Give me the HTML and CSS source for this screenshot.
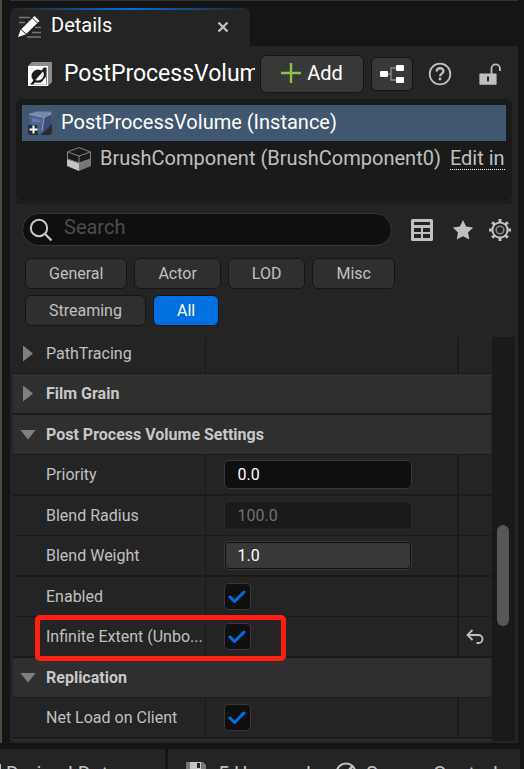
FILE: index.html
```html
<!DOCTYPE html>
<html lang="en">
<head>
<meta charset="utf-8">
<meta name="viewport" content="width=device-width, initial-scale=1">
<title>Details</title>
<link rel="stylesheet" href="styles.css">
</head>
<body>
<div class="window">
  <main class="dock">
    <div class="tab">
      <svg class="tab-icon" width="24" height="24" viewBox="0 0 24 24"><path d="M1 2.500h11M1 7.500h6M17 12.500h6M14 17.500h9M9 22h14" stroke="#777" stroke-width="1.500"/><path d="M0 22l2.500-7L16.500 1l5 5L7.500 19.500z" fill="#fff"/><path d="M3 14.500l5 4.500M14.500 3l5 5" stroke="#242424" stroke-width="1"/></svg>
      <h1>Details</h1>
      <button class="close" aria-label="Close tab"><svg width="12" height="12" viewBox="0 0 12 12"><path d="M1.500 1.500l9 9M10.500 1.500l-9 9" stroke="#c0c0c0" stroke-width="2.400"/></svg></button>
    </div>
    <section class="panel">
      <header class="actor">
        <svg class="actor-icon" width="24" height="24" viewBox="0 0 24 24"><path d="M0 4l4-4h20v20l-4 4z" fill="#8d8d8d"/><path d="M0 4h20v20H0z" fill="#fff"/><path d="M18.500 5.500v17H2L5 19l11-13.500z" fill="#1b1b1b"/><path d="M18 8v14.500H5L7 20.500h6l5-6z" fill="#fff"/><circle cx="10" cy="14" r="6.500" fill="#1b1b1b"/><path d="M7.500 18L15 9.500a6 6 0 0 1-7.500 8.500z" fill="#fff"/></svg>
        <h2>PostProcessVolume</h2>
        <button class="btn add"><svg width="20" height="20" viewBox="0 0 20 20"><path d="M10 0v20M0 10h20" stroke="#8bc34a" stroke-width="2.400"/></svg>Add</button>
        <button class="btn graph" aria-label="Edit blueprint"><svg width="26" height="20" viewBox="0 0 26 20"><path d="M8 10h4M18 4h-6v12h6" fill="none" stroke="#8a8a8a" stroke-width="1.300"/><rect x="1" y="7" width="8" height="6" rx="1" fill="#fff"/><rect x="17" y="1" width="8" height="6" rx="1" fill="#fff"/><rect x="17" y="13" width="8" height="6" rx="1" fill="#fff"/></svg></button>
        <button class="plain help" aria-label="Help"><svg width="24" height="24" viewBox="0 0 24 24"><circle cx="12" cy="12" r="10.300" fill="none" stroke="#c0c0c0" stroke-width="1.800"/><path d="M8.700 9.500c0-4.300 6.700-4.300 6.700-.3 0 2.400-3.300 2.500-3.300 5" fill="none" stroke="#c0c0c0" stroke-width="2.300"/><circle cx="12" cy="17" r="1.400" fill="#c0c0c0"/></svg></button>
        <button class="plain lock" aria-label="Lock"><svg width="22" height="22" viewBox="0 0 22 22"><path d="M12.500 11V5.500a4.200 4.200 0 0 1 8.400 0V8" fill="none" stroke="#c0c0c0" stroke-width="1.800"/><path fill-rule="evenodd" d="M1 10.500h16a.6.6 0 0 1 .6.600v10a.6.6 0 0 1-.6.600H1a.6.6 0 0 1-.6-.6v-10a.6.6 0 0 1 .6-.6zm7 3v5h2v-5z" fill="#c0c0c0"/></svg></button>
      </header>

      <div class="tree">
        <div class="node selected">
          <svg width="24" height="24" viewBox="0 0 24 24"><path d="M13 23l8-12 3 3v8l-2 2h-9z" fill="#292c32"/><path d="M1 3l7-2.500h14.500L24 3l-8 4z" fill="#7189b0"/><path d="M1 3l15 3-2 16-6 1-6-6z" fill="#4c6390"/><path d="M16 6l7-3-1 12-8 8z" fill="#3a4d76"/><path d="M1 3l15 3.500L23 3M16 6.500L14 20" fill="none" stroke="#8ca0c4" stroke-width="1"/><path d="M4 7l9 2-1 3-8-1z" fill="#6079a5"/><path d="M0 14h9l1 10H2l-2-2z" fill="#252b36"/><path d="M5.500 14.500v8M1.500 18.500h8" stroke="#fff" stroke-width="2"/></svg>
          <span>PostProcessVolume (Instance)</span>
        </div>
        <div class="node child">
          <svg width="24" height="24" viewBox="0 0 24 24"><path d="M0 12l12 4v8L0 19z" fill="#c4c4c4"/><path d="M24 12l-12 4v8l12-5z" fill="#777"/><path d="M.5 12V5L12 .5 23.500 5v7L12 16zM.5 5L12 9l11.500-4M12 9v7" fill="none" stroke="#858585" stroke-width="1"/></svg>
          <span>BrushComponent (BrushComponent0)</span>
          <a href="#">Edit in</a>
        </div>
      </div>
      <div class="splitter"></div>

      <div class="searchbar">
        <label class="search">
          <svg width="24" height="24" viewBox="0 0 24 24"><circle cx="10" cy="10" r="8.200" fill="none" stroke="#c8c8c8" stroke-width="2"/><path d="M16 16l6.500 6.500" stroke="#c8c8c8" stroke-width="2.300"/></svg>
          <input type="search" placeholder="Search" aria-label="Search">
        </label>
        <button class="plain" aria-label="Property matrix"><svg width="22" height="22" viewBox="0 0 22 22"><path fill-rule="evenodd" d="M1.500 0h19A1.500 1.500 0 0 1 22 1.500v19a1.500 1.500 0 0 1-1.500 1.500h-19A1.500 1.500 0 0 1 0 20.500v-19A1.500 1.500 0 0 1 1.500 0zM3 3v3h16V3zM3 9v4h7V9zm9 0v4h7V9zM3 15v4h7v-4zm9 0v4h7v-4z" fill="#c0c0c0"/></svg></button>
        <button class="plain favorites" aria-label="Favorites"><svg width="22" height="22" viewBox="0 0 22 22"><path d="M11 1l3.100 6.600 7.100.9-5.200 5 1.300 7.100L11 17.200l-6.300 3.400L6 13.500.8 8.500l7.100-.9z" fill="#c0c0c0"/></svg></button>
        <button class="plain" aria-label="Settings"><svg width="24" height="24" viewBox="0 0 24 24"><g stroke="#c0c0c0" fill="none"><circle cx="12" cy="12" r="7.600" stroke-width="2"/><circle cx="12" cy="12" r="3.800" stroke="#888" stroke-width="1.600"/><path d="M12 1v3.500M12 19.500V23M1 12h3.500M19.500 12H23M4.200 4.200l2.300 2.300M17.500 17.500l2.300 2.300M4.200 19.800l2.300-2.300M17.500 6.500l2.300-2.300" stroke-width="3"/></g></svg></button>
      </div>

      <nav class="filters" aria-label="Categories">
        <button>General</button><button>Actor</button><button>LOD</button><button>Misc</button><button>Streaming</button><button class="active">All</button>
      </nav>

      <div class="properties">
        <div class="rows">
          <div class="row first"><div class="name"><i class="arrow right"></i>PathTracing</div><div class="value"></div><div class="reset"></div></div>
          <div class="row group"><i class="arrow right"></i>Film Grain</div>
          <div class="row group"><i class="arrow down"></i>Post Process Volume Settings</div>
          <div class="row"><label class="name" for="priority">Priority</label><div class="value"><input id="priority" type="text" value="0.0"></div><div class="reset"></div></div>
          <div class="row"><label class="name" for="radius">Blend Radius</label><div class="value"><input id="radius" type="text" value="100.0" disabled></div><div class="reset"></div></div>
          <div class="row"><label class="name" for="weight">Blend Weight</label><div class="value"><input id="weight" class="slider" type="text" value="1.0"></div><div class="reset"></div></div>
          <div class="row"><label class="name" for="enabled">Enabled</label><div class="value"><span class="check"><input id="enabled" type="checkbox" checked><svg width="18" height="14" viewBox="0 0 18 14"><path d="M2 7l4.500 4.500L16 2" /></svg></span></div><div class="reset"></div></div>
          <div class="row marked"><label class="name" for="infinite">Infinite Extent (Unbo...</label><div class="value"><span class="check"><input id="infinite" type="checkbox" checked><svg width="18" height="14" viewBox="0 0 18 14"><path d="M2 7l4.500 4.500L16 2" /></svg></span></div><div class="reset"><button class="plain" aria-label="Reset to default"><svg width="18" height="16" viewBox="0 0 18 16"><path d="M6.500 1L1.500 6l5 5M1.500 6h11a4 4 0 0 1 0 8h-2" fill="none" stroke="#c0c0c0" stroke-width="1.800"/></svg></button></div></div>
          <div class="row group"><i class="arrow down"></i>Replication</div>
          <div class="row"><label class="name" for="net">Net Load on Client</label><div class="value"><span class="check"><input id="net" type="checkbox" checked><svg width="18" height="14" viewBox="0 0 18 14"><path d="M2 7l4.500 4.500L16 2" /></svg></span></div><div class="reset"></div></div>
          <div class="row group last"></div>
        </div>
        <div class="scrollbar"><div class="thumb"></div></div>
      </div>
    </section>
  </main>
  <footer class="status">
    <div class="derived"><svg width="6" height="22" viewBox="0 0 6 22"><path d="M0 2h1v18H0z" fill="#c0c0c0"/></svg><span>Derived Data</span></div>
    <div class="tasks">
      <svg width="20" height="20" viewBox="0 0 20 20"><path d="M0 0h17l3 3v17H0z" fill="#777"/><path d="M4 0h11v8H4z" fill="#c4c4c4"/><path d="M11 1h3v5h-3z" fill="#242424"/></svg><span>5 Unsaved</span>
      <svg class="source" width="22" height="22" viewBox="0 0 22 22"><circle cx="11" cy="11" r="9.500" fill="none" stroke="#c0c0c0" stroke-width="2"/><path d="M4 18L18 4" stroke="#c0c0c0" stroke-width="2.500"/></svg><span>Source Control</span>
    </div>
  </footer>
</div>
</body>
</html>
```
FILE: styles.css
```css
*, *::before, *::after { box-sizing: border-box; }
body { margin: 0; background: #151515; color: #c0c0c0; font: 16px/20px Roboto, sans-serif; }
h1, h2 { margin: 0; font-weight: 400; color: #fff; }
button, input { font: inherit; color: inherit; margin: 0; }
button { padding: 0; border: 0; background: none; }
svg { display: block; flex: none; }

.window { display: flex; flex-direction: column; height: 100vh; overflow: hidden; }
.dock { flex: 1; min-height: 0; display: flex; flex-direction: column; margin-bottom: 6px; padding: 0 6px 0 8px; border-left: 2px solid #51473b; }
.dock::before { content: ""; flex: none; height: 1px; margin-bottom: 7px; background: #333; }
.tab { flex: none; display: flex; align-items: center; width: 240px; height: 38px; padding: 0 21px 0 8px; border-radius: 6px 6px 0 0; background: linear-gradient(90deg, #242424, #0070e0 50%, #242424) top / 100% 2px no-repeat #242424; }
.tab h1 { flex: 1; margin-left: 9px; padding-bottom: 4px; font-size: 20px; line-height: 24px; }
.panel { flex: 1; min-height: 0; display: flex; flex-direction: column; padding-bottom: 2px; background: #242424; }

.actor { flex: none; display: flex; align-items: center; height: 53px; padding: 2px 17px 0 18px; }
.actor h2 { flex: 1; min-width: 0; margin-left: 12px; overflow: hidden; white-space: nowrap; font-size: 23px; line-height: 28px; }
.btn { flex: none; display: flex; align-items: center; justify-content: center; gap: 6px; border: 1px solid #141414; border-radius: 6px; background: #383838; color: #fff; }
.add { width: 104px; height: 38px; margin-left: 5px; padding-bottom: 2px; font-size: 20px; }
.graph { width: 42px; height: 34px; margin-left: 7px; }
.help { margin-left: 15px; }
.lock { margin-left: 27px; }

.tree { flex: none; height: 102px; margin: 0 6px; padding: 6px; border-radius: 6px; background: #1a1a1a; font-size: 20px; line-height: 22px; white-space: nowrap; }
.node { display: flex; align-items: center; height: 36px; }
.node span, .node a { margin-bottom: 2px; }
.selected { padding-left: 6px; gap: 9px; background: #40576f; color: #fff; }
.child { padding-left: 45px; gap: 9px; }
.child a { color: inherit; text-decoration: none; border-bottom: 1px dotted #fff; }
.splitter { flex: none; height: 3px; margin: 0 3px; background: #1e1e1e; }

.searchbar { flex: none; display: flex; align-items: center; gap: 14px; margin: 9px 6px 12px 12px; }
.search { flex: 1; min-width: 0; display: flex; align-items: center; gap: 11px; height: 33px; margin-right: 5px; padding: 0 6px; border: 1px solid #383838; border-radius: 17px; background: #0f0f0f; }
.search input { flex: 1; min-width: 0; padding: 0 0 5px; border: 0; outline: 0; background: none; font-size: 20px; }
.search input::placeholder { color: #4d4d4d; opacity: 1; }
.favorites { margin-left: 5px; }
.filters { flex: none; display: flex; flex-wrap: wrap; gap: 6px 7px; padding: 0 100px 11px 15px; }
.filters button { height: 31px; padding: 0 23px; border: 1px solid #151515; border-radius: 6px; background: #2f2f2f; }
.filters .active { background: #0070e0; color: #fff; }

.properties { flex: 1; min-height: 0; display: flex; margin: 0 3px; overflow: hidden; }
.rows { flex: 1; min-width: 0; }
.row { display: flex; height: 40px; border-bottom: 1px solid #1a1a1a; }
.row:nth-child(even) { height: 41px; border-bottom-width: 2px; }
.row.first { height: 37px; }
.row.last { height: 2px; border: 0; }
.name { flex: 0 0 40%; display: flex; align-items: center; padding-left: 33px; white-space: nowrap; }
.first .name { padding: 0 0 3px 10px; }
.value { flex: 1; min-width: 0; display: flex; align-items: center; padding-left: 18px; border-left: 1px solid #1a1a1a; border-right: 2px solid #1a1a1a; }
.reset { flex: none; display: flex; align-items: center; width: 33px; padding-left: 7px; }
.group { align-items: center; padding-left: 10px; background: #2f2f2f; font-weight: 700; color: #c8c8c8; }
.rows .group { margin-right: 1px; }
.arrow { flex: none; width: 10px; height: 16px; margin-right: 13px; background: #808080; clip-path: polygon(0 0, 100% 50%, 0 100%); }
.arrow.down { width: 16px; height: 10px; margin: 0 10px 0 -3px; clip-path: polygon(0 0, 100% 0, 50% 100%); }
.value input[type="text"] { width: 188px; height: 29px; padding: 0 13px; border: 1px solid #383838; border-radius: 5px; background: #0f0f0f; color: #fff; }
.value input[type="text"]:disabled { border-color: #2b2b2b; background: #1a1a1a; color: #727272; }
.value input.slider { background: #383838; box-shadow: inset 0 0 0 1px #0f0f0f; }
.check { display: grid; place-items: center; width: 27px; height: 27px; }
.check input { grid-area: 1 / 1; appearance: none; width: 27px; height: 27px; border: 1px solid #383838; border-radius: 4px; background: #0f0f0f; }
.check svg { grid-area: 1 / 1; z-index: 1; visibility: hidden; pointer-events: none; fill: none; stroke: #0070e0; stroke-width: 3; stroke-linecap: round; stroke-linejoin: round; }
.check input:checked + svg { visibility: visible; }
.marked { position: relative; }
.marked::after { content: ""; position: absolute; z-index: 2; top: -2px; left: 22px; width: 251px; height: 46px; border: 5px solid #ff2012; border-radius: 5px; pointer-events: none; }
.scrollbar { flex: none; width: 23px; padding: 188px 6px 0 5px; background: #1a1a1a; }
.thumb { width: 12px; height: 101px; border-radius: 6px; background: #575757; }

.status { flex: none; display: flex; height: 20px; margin-right: 4px; overflow: hidden; font-size: 20px; line-height: 24px; white-space: nowrap; }
.status > div { display: flex; align-items: flex-start; padding-top: 13px; background: #242424; }
.derived { flex: none; width: 165px; margin-right: 3px; }
.tasks { flex: 1; padding-left: 18px; gap: 12px; }
.tasks span { width: 96px; }
.tasks .source { margin-left: 9px; }
.tasks .source + span { width: auto; margin-left: -3px; }
```
